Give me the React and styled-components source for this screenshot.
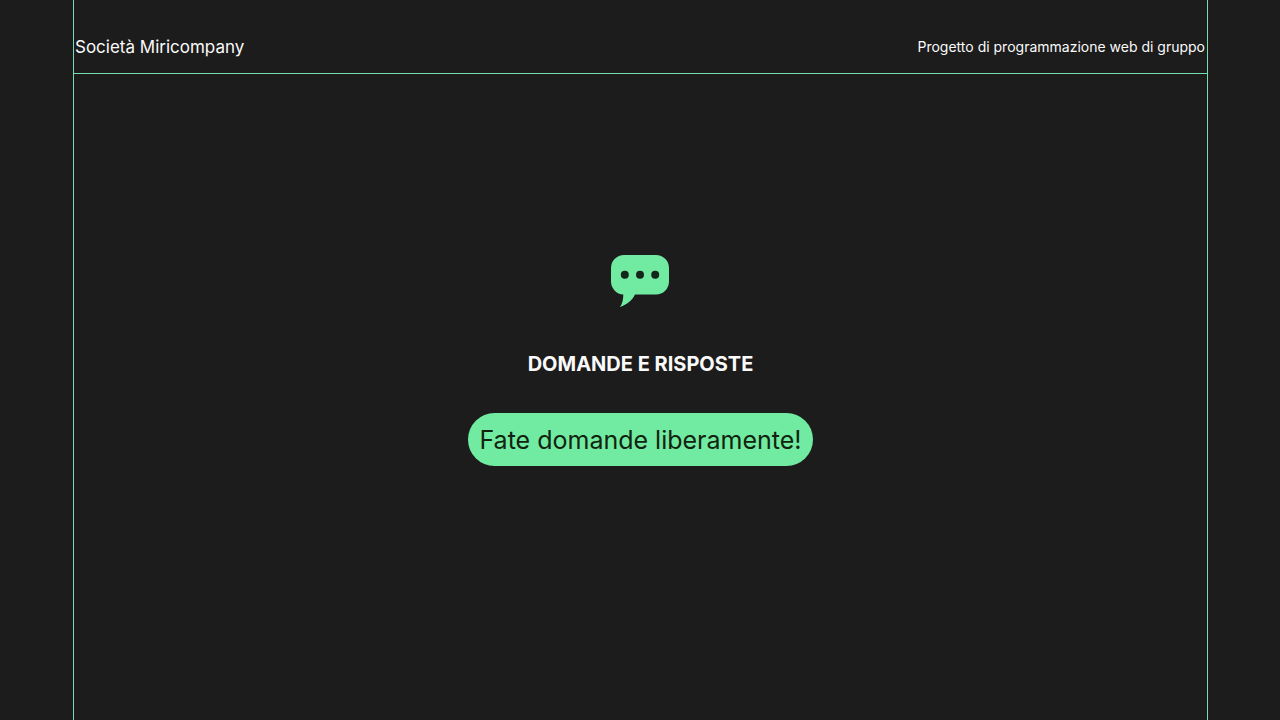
import React from "react";
import styled, { createGlobalStyle } from "styled-components";

const GlobalStyle = createGlobalStyle`
  *, *::before, *::after { box-sizing: border-box; }
  body {
    margin: 0;
    background: #1c1c1c;
    color: #fafafa;
    font-family: Inter, "Liberation Sans", sans-serif;
  }
`;

const Slide = styled.div`
  display: flex;
  min-height: 100vh;
  padding: 0 72px 0 73px;
`;

const Frame = styled.div`
  flex: 1;
  display: flex;
  flex-direction: column;
  border: solid #74dcb0;
  border-width: 0 1px;
`;

const Header = styled.header`
  display: flex;
  align-items: center;
  justify-content: space-between;
  height: 74px;
  padding: 20px 2px 0 1px;
  border-bottom: 1px solid #74dcb0;
`;

const HeaderText = styled.p`
  margin: 0;
  font-size: ${({ $size }) => $size}px;
  line-height: 24px;
`;

const Main = styled.main`
  flex: 1;
  display: flex;
  flex-direction: column;
  align-items: center;
  justify-content: center;
  padding-bottom: 74px;
`;

const Title = styled.h1`
  margin: 44px 0 36px;
  font-size: 20px;
  font-weight: 700;
  line-height: 26px;
`;

const Pill = styled.p`
  margin: 0;
  padding: 11px 11px 9px;
  border-radius: 27px;
  background: #70eba1;
  color: #11230f;
  font-size: 25px;
  line-height: 33px;
`;

const ChatIcon = () => (
  <svg width="59" height="52" viewBox="0 0 59 52" aria-hidden="true">
    <path
      fill="#70eba1"
      d="M13 0H45A13 13 0 0 1 58 13V26.500A13 13 0 0 1 45 39.500H24C21 45.500 16 49.500 9 52C11.500 48.500 12.300 44 12.300 39.500A13 13 0 0 1 0 26.500V13A13 13 0 0 1 13 0Z"
    />
    <circle cx="13.800" cy="19.800" r="4" fill="#14251a" />
    <circle cx="29" cy="19.800" r="4" fill="#14251a" />
    <circle cx="44.200" cy="19.800" r="4" fill="#14251a" />
  </svg>
);

export default function App() {
  return (
    <>
      <GlobalStyle />
      <Slide>
        <Frame>
          <Header>
            <HeaderText $size={17}>Società Miricompany</HeaderText>
            <HeaderText $size={14}>Progetto di programmazione web di gruppo</HeaderText>
          </Header>
          <Main>
            <ChatIcon />
            <Title>DOMANDE E RISPOSTE</Title>
            <Pill>Fate domande liberamente!</Pill>
          </Main>
        </Frame>
      </Slide>
    </>
  );
}
